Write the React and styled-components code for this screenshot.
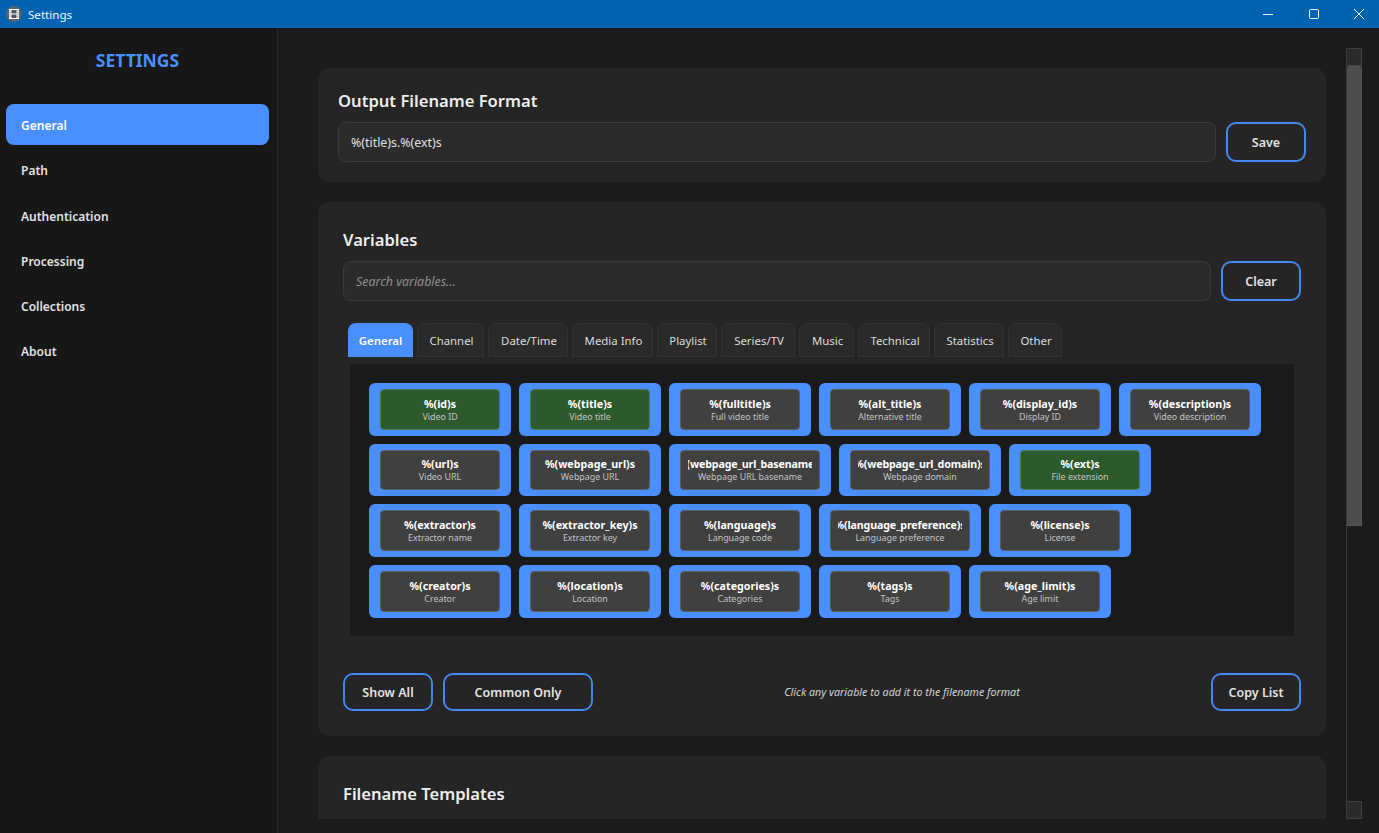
import styled, { createGlobalStyle } from 'styled-components';

const GlobalStyle = createGlobalStyle`
    html, body { margin: 0; padding: 0; height: 100%; background: #1b1b1b; overflow: hidden; }
    body { font-family: "Noto Sans", "Open Sans", sans-serif; color: #e6e6e6; }
    * { box-sizing: border-box; }
`

const Window = styled.div`
    width: 1379px;
    height: 833px;
    display: flex;
    flex-direction: column;
`

const TitleBar = styled.div`
    height: 28px;
    flex: none;
    background: #0063b1;
    display: flex;
    align-items: center;
    padding-left: 6px;
    color: #f2f6fa;
    font-size: 11.6px;
`

const AppIcon = styled.span`
    width: 16px;
    height: 16px;
    border-radius: 50%;
    background: #58626f;
    display: flex;
    align-items: center;
    justify-content: center;
    margin-right: 6px;
`

const WindowControls = styled.div`
    margin-left: auto;
    display: flex;
    align-items: center;
    gap: 35.5px;
    padding-right: 15px;
`

const Body = styled.div`
    flex: 1;
    min-height: 0;
    display: flex;
`

const Sidebar = styled.nav`
    width: 278px;
    flex: none;
    background: #171717;
    border-right: 1px solid #2c2c2c;
    padding: 20px 8px 0 6px;
`

const Brand = styled.div`
    text-align: center;
    color: #4a8fff;
    font-size: 17.5px;
    font-weight: 700;
    line-height: 24px;
    margin: 0 0 32px;
`

const NavItem = styled.div`
    height: 41px;
    margin-bottom: 4.25px;
    padding: 2px 0 0 15px;
    display: flex;
    align-items: center;
    border-radius: 8px;
    font-size: 12px;
    font-weight: 600;
    color: ${p => (p.$active ? '#ffffff' : '#e2e2e2')};
    background: ${p => (p.$active ? '#4a8fff' : 'transparent')};
`

const Main = styled.main`
    flex: 1;
    min-width: 0;
    display: flex;
    padding-bottom: 14px;
`

const Content = styled.div`
    width: 1048px;
    flex: none;
    padding: 40px 0 0 40px;
    overflow: hidden;
`

const Card = styled.section`
    background: #252525;
    border-radius: 12px;
    margin-bottom: 20px;
    padding: ${p => p.$pad};
    height: ${p => p.$height}px;
`

const CardTitle = styled.h2`
    margin: 0 0 ${p => p.$gap}px;
    padding-top: 1px;
    height: 24px;
    font-size: 16.6px;
    font-weight: 600;
    line-height: 24px;
    color: #eeeeee;
`

const InputRow = styled.div`
    display: flex;
    justify-content: space-between;
`

const TextBox = styled.div`
    width: ${p => p.$width}px;
    height: 40px;
    background: #2b2b2b;
    border: 1px solid #3a3a3a;
    border-radius: 8px;
    padding-left: 12px;
    display: flex;
    align-items: center;
    font-size: 12.4px;
    color: ${p => (p.$placeholder ? '#8f8f8f' : '#e0e0e0')};
    font-style: ${p => (p.$placeholder ? 'italic' : 'normal')};
`

const OutlineButton = styled.div`
    width: ${p => p.$width}px;
    height: ${p => p.$height}px;
    border: 2px solid #4287f0;
    border-radius: 10px;
    display: flex;
    align-items: center;
    justify-content: center;
    font-size: 12.5px;
    font-weight: 600;
    color: #e2e2e2;
`

const TabBar = styled.div`
    display: flex;
    gap: 4px;
    margin: 22px 0 7px 5px;
`

const Tab = styled.div`
    width: ${p => p.$width}px;
    height: 34px;
    border-radius: 8px 8px 0 0;
    padding-left: ${p => (p.$active ? 0 : 2)}px;
    display: flex;
    align-items: center;
    justify-content: center;
    font-size: 11.4px;
    font-weight: ${p => (p.$active ? 600 : 400)};
    color: ${p => (p.$active ? '#ffffff' : '#dcdcdc')};
    background: ${p => (p.$active ? '#4a8fff' : '#2a2a2a')};
    border: ${p => (p.$active ? 'none' : '1px solid #333333')};
`

const TabPanel = styled.div`
    margin: 0 7px;
    height: 272px;
    background: #1a1a1a;
    padding: 19px;
    display: flex;
    flex-wrap: wrap;
    align-content: flex-start;
    gap: 8px;
`

const Chip = styled.div`
    width: ${p => (p.$wide ? 162 : 142)}px;
    height: 52.67px;
    background: #4a8fff;
    border-radius: 6px;
    padding: 6px 11px;
`

const ChipInner = styled.div`
    height: 100%;
    border-radius: 4px;
    border: 1px solid ${p => (p.$common ? '#4f7a55' : '#5c5c5c')};
    background: ${p => (p.$common ? '#2d5a2d' : '#404040')};
    padding: 1px 7px 0;
    display: flex;
    flex-direction: column;
    align-items: center;
    justify-content: center;
`

const ChipName = styled.div`
    width: 100%;
    display: flex;
    justify-content: center;
    overflow: hidden;
    white-space: nowrap;
    font-size: 10.7px;
    font-weight: 700;
    line-height: 14px;
    letter-spacing: ${p => (p.$tight ? '-0.15px' : '0')};
    color: #ffffff;
`

const ChipLabel = styled.div`
    white-space: nowrap;
    font-size: 8.9px;
    line-height: 12px;
    color: #c4c4c4;
`

const Footer = styled.div`
    display: flex;
    align-items: center;
    gap: 10px;
    margin-top: 37px;
`

const Hint = styled.div`
    flex: 1;
    text-align: center;
    font-size: 10.7px;
    font-style: italic;
    color: #d0d0d0;
`

const Scrollbar = styled.div`
    width: 16px;
    margin: 20px 0 0 20px;
    display: flex;
    flex-direction: column;
    border-left: 1px solid #3a3a3a;
`

const ScrollButton = styled.div`
    height: 18px;
    flex: none;
    background: #2b2b2b;
    border: 1px solid #3f3f3f;
    border-left: none;
`

const ScrollThumb = styled.div`
    height: 460px;
    flex: none;
    margin-bottom: auto;
    background: #4d4d4d;
    border-radius: 3px 3px 0 0;
    border: 1px solid #555555;
    border-left: none;
`

const navItems = ['General', 'Path', 'Authentication', 'Processing', 'Collections', 'About'];

const tabs = [
    ['General', 65], ['Channel', 67], ['Date/Time', 80], ['Media Info', 81], ['Playlist', 60],
    ['Series/TV', 74], ['Music', 55], ['Technical', 72], ['Statistics', 70], ['Other', 54],
];

const variables = [
    { name: '%(id)s', label: 'Video ID', common: true },
    { name: '%(title)s', label: 'Video title', common: true },
    { name: '%(fulltitle)s', label: 'Full video title' },
    { name: '%(alt_title)s', label: 'Alternative title' },
    { name: '%(display_id)s', label: 'Display ID' },
    { name: '%(description)s', label: 'Video description' },
    { name: '%(url)s', label: 'Video URL' },
    { name: '%(webpage_url)s', label: 'Webpage URL' },
    { name: '%(webpage_url_basename)s', label: 'Webpage URL basename', wide: true },
    { name: '%(webpage_url_domain)s', label: 'Webpage domain', wide: true },
    { name: '%(ext)s', label: 'File extension', common: true },
    { name: '%(extractor)s', label: 'Extractor name' },
    { name: '%(extractor_key)s', label: 'Extractor key' },
    { name: '%(language)s', label: 'Language code' },
    { name: '%(language_preference)s', label: 'Language preference', wide: true },
    { name: '%(license)s', label: 'License' },
    { name: '%(creator)s', label: 'Creator' },
    { name: '%(location)s', label: 'Location' },
    { name: '%(categories)s', label: 'Categories' },
    { name: '%(tags)s', label: 'Tags' },
    { name: '%(age_limit)s', label: 'Age limit' },
];

const FilmIcon = () => (
    <svg width="12" height="12" viewBox="0 0 12 12">
        <rect x="1" y="1" width="10" height="10" fill="#fff" />
        <path d="M3.5 2h5v3.5h-5zM3.5 6.5h5V10h-5z" fill="#4a5563" />
        <path d="M1.6 2.2h1v1h-1zM1.6 4.2h1v1h-1zM1.6 6.2h1v1h-1zM1.6 8.2h1v1h-1zM9.4 2.2h1v1h-1zM9.4 4.2h1v1h-1zM9.4 6.2h1v1h-1zM9.4 8.2h1v1h-1z" fill="#4a5563" />
    </svg>
);

const App = () => {
    return (
        <>
            <GlobalStyle />
            <Window>
                <TitleBar>
                    <AppIcon><FilmIcon /></AppIcon>
                    Settings
                    <WindowControls>
                        <svg width="10" height="10" viewBox="0 0 10 10"><path d="M0 5.5h10" stroke="#fff" /></svg>
                        <svg width="10" height="10" viewBox="0 0 10 10"><rect x=".5" y=".5" width="9" height="9" rx="1" fill="none" stroke="#fff" /></svg>
                        <svg width="10" height="10" viewBox="0 0 10 10"><path d="M0 0l10 10M10 0L0 10" stroke="#fff" /></svg>
                    </WindowControls>
                </TitleBar>
                <Body>
                    <Sidebar>
                        <Brand>SETTINGS</Brand>
                        {navItems.map((item, i) => (
                            <NavItem key={item} $active={i === 0}>{item}</NavItem>
                        ))}
                    </Sidebar>
                    <Main>
                        <Content>
                            <Card $pad="20px" $height={114}>
                                <CardTitle $gap={10}>Output Filename Format</CardTitle>
                                <InputRow>
                                    <TextBox $width={878}>%(title)s.%(ext)s</TextBox>
                                    <OutlineButton $width={80} $height={40}>Save</OutlineButton>
                                </InputRow>
                            </Card>
                            <Card $pad="25px" $height={534}>
                                <CardTitle $gap={10}>Variables</CardTitle>
                                <InputRow>
                                    <TextBox $width={868} $placeholder>Search variables...</TextBox>
                                    <OutlineButton $width={80} $height={40}>Clear</OutlineButton>
                                </InputRow>
                                <TabBar>
                                    {tabs.map(([name, width], i) => (
                                        <Tab key={name} $width={width} $active={i === 0}>{name}</Tab>
                                    ))}
                                </TabBar>
                                <TabPanel>
                                    {variables.map(v => (
                                        <Chip key={v.name} $wide={v.wide}>
                                            <ChipInner $common={v.common}>
                                                <ChipName $tight={v.wide}>{v.name}</ChipName>
                                                <ChipLabel>{v.label}</ChipLabel>
                                            </ChipInner>
                                        </Chip>
                                    ))}
                                </TabPanel>
                                <Footer>
                                    <OutlineButton $width={90} $height={38}>Show All</OutlineButton>
                                    <OutlineButton $width={150} $height={38}>Common Only</OutlineButton>
                                    <Hint>Click any variable to add it to the filename format</Hint>
                                    <OutlineButton $width={90} $height={38}>Copy List</OutlineButton>
                                </Footer>
                            </Card>
                            <Card $pad="25px" $height={200}>
                                <CardTitle $gap={10}>Filename Templates</CardTitle>
                            </Card>
                        </Content>
                        <Scrollbar>
                            <ScrollButton />
                            <ScrollThumb />
                            <ScrollButton />
                        </Scrollbar>
                    </Main>
                </Body>
            </Window>
        </>
    );
};

export default App;
